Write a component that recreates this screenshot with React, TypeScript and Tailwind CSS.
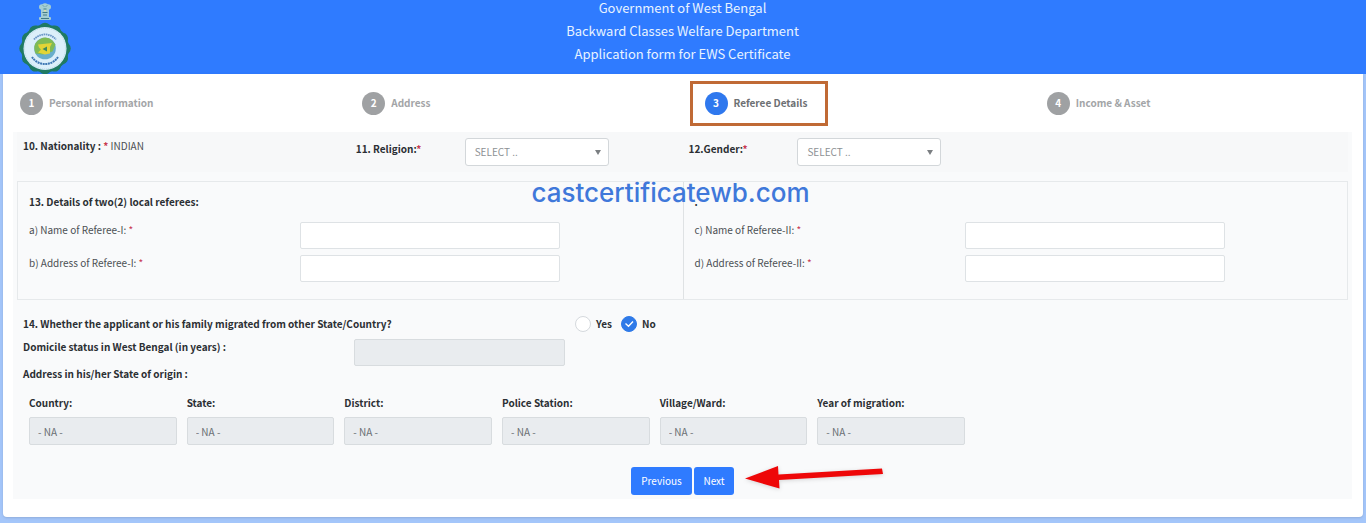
import { useState } from 'react';
import type { ReactNode } from 'react';

const steps = ['Personal information', 'Address', 'Referee Details', 'Income & Asset'];
const currentStep = 2;

const originFields = ['Country:', 'State:', 'District:', 'Police Station:', 'Village/Ward:', 'Year of migration:'];

const referees = [
    {
        title: '13. Details of two(2) local referees:',
        fields: [
            { id: 'name-1', label: 'a) Name of Referee-I:' },
            { id: 'address-1', label: 'b) Address of Referee-I:' },
        ],
    },
    {
        title: '.',
        fields: [
            { id: 'name-2', label: 'c) Name of Referee-II:' },
            { id: 'address-2', label: 'd) Address of Referee-II:' },
        ],
    },
];

const rimAngles = [0, 30, 60, 90, 120, 150, 180, 210, 240, 270, 300, 330];

function Emblem() {
    return (
        <svg viewBox="0 0 52 72" className="w-[52px] h-[72px]" role="img" aria-label="State emblem">
            {/* lion capital */}
            <g fill="#a3cdd3">
                <circle cx="22.8" cy="5" r="2.8" />
                <circle cx="29.2" cy="5" r="2.8" />
                <circle cx="26" cy="4.5" r="3.2" />
                <rect x="22" y="6" width="8" height="9" />
                <rect x="20" y="15" width="12" height="3" rx="1" />
            </g>
            <g stroke="#35707c" strokeWidth="0.9" fill="none">
                <path d="M24 3.5l1 1M28 3.5l-1 1M24.5 7h3M23.5 10.500h5M24 13h4M22 16.500h8" />
            </g>
            <circle cx="26" cy="8.7" r="0.9" fill="#e8e2a0" />
            {/* scalloped rim */}
            <circle cx="26" cy="46.5" r="24" fill="#1f7a63" />
            {rimAngles.map((angle) => (
                <circle key={angle} cx="45.5" cy="46.5" r="6.2" fill="#1f7a63" transform={`rotate(${angle} 26 46.5)`} />
            ))}
            <circle cx="26" cy="46.5" r="21.5" fill="#dceffa" />
            <circle cx="26" cy="46.5" r="20.5" fill="none" stroke="#b5d8e6" strokeDasharray="1 1" />
            <path d="M15 37.500a14.500 14.500 0 0 1 22 0" fill="none" stroke="#6b97c8" strokeWidth="1.800" strokeDasharray="1.600 0.600" />
            <path d="M13 55a15.500 15.500 0 0 0 26 0" fill="none" stroke="#3f78b4" strokeWidth="2" strokeDasharray="2 0.6" />
            <circle cx="26" cy="46.5" r="10.8" fill="#69aecb" />
            <path d="M15.500 48a10.800 10.800 0 0 1 18-9.500l3 4-3 7-10 3-7-1z" fill="#7fbb55" />
            <path d="M19 42.500l14-1.500-2 4 0 6.500-5 1-7-2 3-3-2-2z" fill="#e2d436" />
            <path d="M23.500 47l4.500-2.500v5z" fill="#3d8a5c" />
        </svg>
    );
}

function Required() {
    return <span className="text-[#c8384f]">*</span>;
}

function SelectBox({ id }: { id: string }) {
    return (
        <div className="relative w-[144px]">
            <select
                id={id}
                className="block w-full h-7 appearance-none rounded-[3px] border border-[#d3d7da] bg-white pl-[9px] text-[#8d9194]"
            >
                <option>SELECT ..</option>
            </select>
            <svg viewBox="0 0 6 5" className="pointer-events-none absolute right-2 top-3 w-[6px] h-[5px]">
                <path d="M0 0h6L3 5z" fill="#7b7f82" />
            </svg>
        </div>
    );
}

type RadioProps = { value: string; checked: boolean; onChange: () => void; children: ReactNode };

function Radio({ value, checked, onChange, children }: RadioProps) {
    return (
        <label className="flex items-center gap-[5px]">
            <span className="relative block w-4 h-4">
                <input
                    type="radio"
                    name="migrated"
                    value={value}
                    checked={checked}
                    onChange={onChange}
                    className="block w-4 h-4 appearance-none rounded-full border border-[#d5d9dd] bg-white checked:border-[#2f7ae8] checked:bg-[#2f7ae8]"
                />
                {checked && (
                    <svg viewBox="0 0 16 16" className="pointer-events-none absolute inset-0 w-4 h-4">
                        <path d="M4.5 7.5L7.5 10.2L12 5.5" fill="none" stroke="#fff" strokeWidth="1.4" />
                    </svg>
                )}
            </span>
            {children}
        </label>
    );
}

export default function App() {
    const [migrated, setMigrated] = useState('No');

    return (
        <div className="min-h-screen bg-[#a4c6fa] pb-[5px] font-['Noto_Sans_CJK_SC','Noto_Sans',sans-serif] text-[10px] leading-4 text-[#2b2f33]">
            <header className="grid grid-cols-[1fr_auto_1fr] h-[74px] bg-[#2f7bff] pl-[19px] pr-5 text-[#e8f3ff]">
                <div className="pt-[2px]">
                    <Emblem />
                </div>
                <div className="flex flex-col gap-2 text-center text-[13px] leading-[15px]">
                    <p>Government of West Bengal</p>
                    <p>Backward Classes Welfare Department</p>
                    <h1>Application form for EWS Certificate</h1>
                </div>
            </header>

            <main className="mx-[3px] rounded-b-sm bg-white pb-[18px] shadow-sm">
                <ol className="grid grid-cols-[342fr_342fr_342fr_316fr] items-center h-[58px] pl-[17px] font-bold text-[#a3a5a7]">
                    {steps.map((step, i) => (
                        <li key={step}>
                            {i === currentStep ? (
                                <div className="-ml-[15px] flex w-[138px] h-[45px] items-center gap-[6px] border-[3px] border-[#c06a35] pl-3 text-[#6d7073]">
                                    <span className="flex w-[23px] h-[23px] items-center justify-center rounded-full bg-[#2f78ee] text-white">
                                        {i + 1}
                                    </span>
                                    {step}
                                </div>
                            ) : (
                                <div className="flex items-center gap-[6px]">
                                    <span className="flex w-[23px] h-[23px] items-center justify-center rounded-full bg-[#9fa1a3] text-white">
                                        {i + 1}
                                    </span>
                                    {step}
                                </div>
                            )}
                        </li>
                    ))}
                </ol>

                <form className="relative ml-[10px] mr-[11px] bg-[#f9fafb] px-1 pb-1" onSubmit={(e) => e.preventDefault()}>
                    <div className="grid grid-cols-4 h-10 bg-[#f7f8f9]">
                        <p className="pl-[6px] pt-[6px] text-[#4b4f53]">
                            <b className="text-[#2b2f33]">10. Nationality : <Required /></b> INDIAN
                        </p>
                        <div className="grid grid-cols-[1fr_2fr] pl-[6px] pt-[6px]">
                            <label htmlFor="religion" className="pt-[3px] font-bold">11. Religion:<Required /></label>
                            <SelectBox id="religion" />
                        </div>
                        <div className="grid grid-cols-[1fr_2fr] pl-[6px] pt-[6px]">
                            <label htmlFor="gender" className="pt-[3px] font-bold">12.Gender:<Required /></label>
                            <SelectBox id="gender" />
                        </div>
                    </div>

                    <div className="mt-[9px] grid grid-cols-2 border border-[#e6e9eb]">
                        {referees.map((referee, i) => (
                            <section
                                key={referee.title}
                                className={`pb-[11px] pl-[11px] pt-3 ${i === 1 ? 'border-l border-[#dfe2e4]' : ''}`}
                            >
                                <h2 className="mb-3 font-bold">{referee.title}</h2>
                                {referee.fields.map((field) => (
                                    <div key={field.id} className="mb-[6px] grid grid-cols-[271fr_382fr] text-[#4b4f53]">
                                        <label htmlFor={field.id}>
                                            {field.label} <Required />
                                        </label>
                                        <input
                                            id={field.id}
                                            type="text"
                                            className="block w-[68%] h-[27px] rounded-xs border border-[#dee2e5] bg-white px-2"
                                        />
                                    </div>
                                ))}
                            </section>
                        ))}
                    </div>

                    <div className="mt-4 grid grid-cols-12 items-center pl-[6px] font-bold">
                        <span className="col-span-5">
                            14. Whether the applicant or his family migrated from other State/Country?
                        </span>
                        <div className="col-span-3 flex gap-[9px]">
                            <Radio value="Yes" checked={migrated === 'Yes'} onChange={() => setMigrated('Yes')}>Yes</Radio>
                            <Radio value="No" checked={migrated === 'No'} onChange={() => setMigrated('No')}>No</Radio>
                        </div>
                    </div>

                    <div className="mt-[7px] grid grid-cols-12 pl-[6px] font-bold">
                        <label htmlFor="domicile" className="col-span-3">Domicile status in West Bengal (in years) :</label>
                        <input
                            id="domicile"
                            type="text"
                            disabled
                            className="col-span-2 mr-[10px] h-[27px] rounded-xs border border-[#d8dcdf] bg-[#e9ecef]"
                        />
                    </div>

                    <h2 className="pl-[6px] font-bold">Address in his/her State of origin :</h2>

                    <div className="ml-3 mt-[13px] grid max-w-[936px] grid-cols-6 gap-[10px]">
                        {originFields.map((label) => (
                            <label key={label} className="block font-bold">
                                {label}
                                <input
                                    type="text"
                                    disabled
                                    value="- NA -"
                                    className="mt-[6px] block w-full h-7 rounded-xs border border-[#d8dcdf] bg-[#e9ecef] px-2 font-normal text-[#6a6f74]"
                                />
                            </label>
                        ))}
                    </div>

                    <div className="mt-[22px] flex justify-center">
                        <div className="relative flex gap-[2px] text-white">
                            <button type="button" className="h-7 w-[61px] rounded-[3px] bg-[#2f7bff]">Previous</button>
                            <button type="submit" className="h-7 w-10 rounded-[3px] bg-[#2f7bff]">Next</button>
                            <svg
                                viewBox="0 0 142 28"
                                className="absolute left-[114px] top-0 w-[142px] h-7 overflow-visible drop-shadow-sm"
                            >
                                <path d="M0 11.5L33 -1L33.5 7.5L137 1.5L138 7L34 13L34.5 21.5Z" fill="#ee0708" />
                            </svg>
                        </div>
                    </div>

                    <p className="pointer-events-none absolute inset-x-0 top-[45px] -translate-x-3 text-center font-['Inter',sans-serif] text-[26px] font-medium leading-8 text-[#3f78da]">
                        castcertificatewb.com
                    </p>
                </form>
            </main>
        </div>
    );
}
